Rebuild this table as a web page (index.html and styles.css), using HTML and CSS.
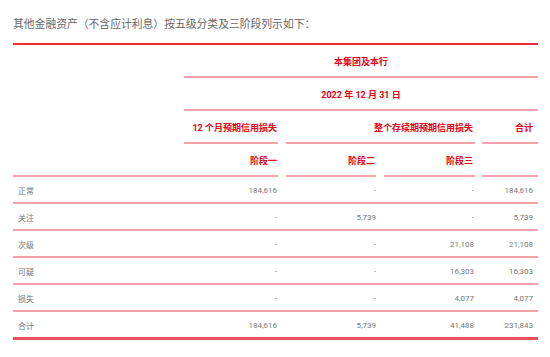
FILE: index.html
```html
<!DOCTYPE html>
<html lang="zh-CN">
<head>
<meta charset="utf-8">
<link rel="stylesheet" href="styles.css">
</head>
<body>
<div class="page">
  <p class="title">其他金融资产（不含应计利息）按五级分类及三阶段列示如下：</p>
  <div class="table">
    <div class="blank r1"></div>
    <div class="h span4 center">本集团及本行</div>
    <div class="blank"></div>
    <div class="h span4 center">2022 年 12 月 31 日</div>
    <div class="blank"></div>
    <div class="h c1">12 个月预期信用损失</div>
    <div class="h c23">整个存续期预期信用损失</div>
    <div class="h c4">合计</div>
    <div class="h lab"></div>
    <div class="h c1">阶段一</div>
    <div class="h c2">阶段二</div>
    <div class="h c3">阶段三</div>
    <div class="h c4"></div>

    <div class="d lab">正常</div><div class="d">184,616</div><div class="d">-</div><div class="d">-</div><div class="d">184,616</div>
    <div class="d lab">关注</div><div class="d">-</div><div class="d">5,739</div><div class="d">-</div><div class="d">5,739</div>
    <div class="d lab">次级</div><div class="d">-</div><div class="d">-</div><div class="d">21,108</div><div class="d">21,108</div>
    <div class="d lab">可疑</div><div class="d">-</div><div class="d">-</div><div class="d">16,303</div><div class="d">16,303</div>
    <div class="d lab">损失</div><div class="d">-</div><div class="d">-</div><div class="d">4,077</div><div class="d">4,077</div>
    <div class="d lab last">合计</div><div class="d last">184,616</div><div class="d last">5,739</div><div class="d last">41,488</div><div class="d last">231,843</div>
  </div>
</div>
</body>
</html>
```

FILE: styles.css
```css
* { box-sizing: border-box; }
html, body { margin: 0; padding: 0; background: #fff; }
.page {
  width: 550px;
  padding: 0 12px 0 13px;
  font-family: Roboto, "Noto Sans CJK SC", sans-serif;
}
.title {
  margin: 0;
  height: 43px;
  padding-top: 15px;
  font-size: 10.8px;
  line-height: 16px;
  color: #666;
  font-family: "Noto Sans CJK SC", sans-serif;
  white-space: nowrap;
}
.table {
  display: grid;
  grid-template-columns: 171px 98px 99px 98px 59px;
  grid-auto-rows: auto;
  border-top: 2px solid #ee2a3a;
  width: 525px;
}
.blank { height: 33px; }
.h {
  height: 33px;
  display: flex;
  align-items: center;
  justify-content: flex-end;
  color: #e60012;
  font-weight: bold;
  font-size: 9px;
  font-family: Roboto, "Noto Sans CJK SC", sans-serif;
  border-bottom: 2px solid #f5a3aa;
  padding-right: 1px;
  padding-top: 2px;
  white-space: nowrap;
}
.span4 { grid-column: span 4; justify-content: center; padding-right: 0; }
.c1 { margin-right: 4px; }
.c23 { grid-column: span 2; margin-left: 4px; margin-right: 4px; padding-right: 2px; }
.c2 { margin-left: 4px; margin-right: 5px; }
.c3 { margin-left: 3px; margin-right: 4px; padding-right: 2px; }
.c4 { margin-left: 3px; padding-right: 5px; }
.h.lab { justify-content: flex-start; }
.d {
  height: 27px;
  display: flex;
  align-items: center;
  justify-content: flex-end;
  padding: 1px 5px 0 5px;
  font-size: 8px;
  color: #777;
  border-bottom: 2px solid #f5a3aa;
  white-space: nowrap;
}
.d.lab { justify-content: flex-start; font-family: "Noto Sans CJK SC", sans-serif; }
.d.last { border-bottom: 3px solid #ea4f5c; height: 28px; }
```
